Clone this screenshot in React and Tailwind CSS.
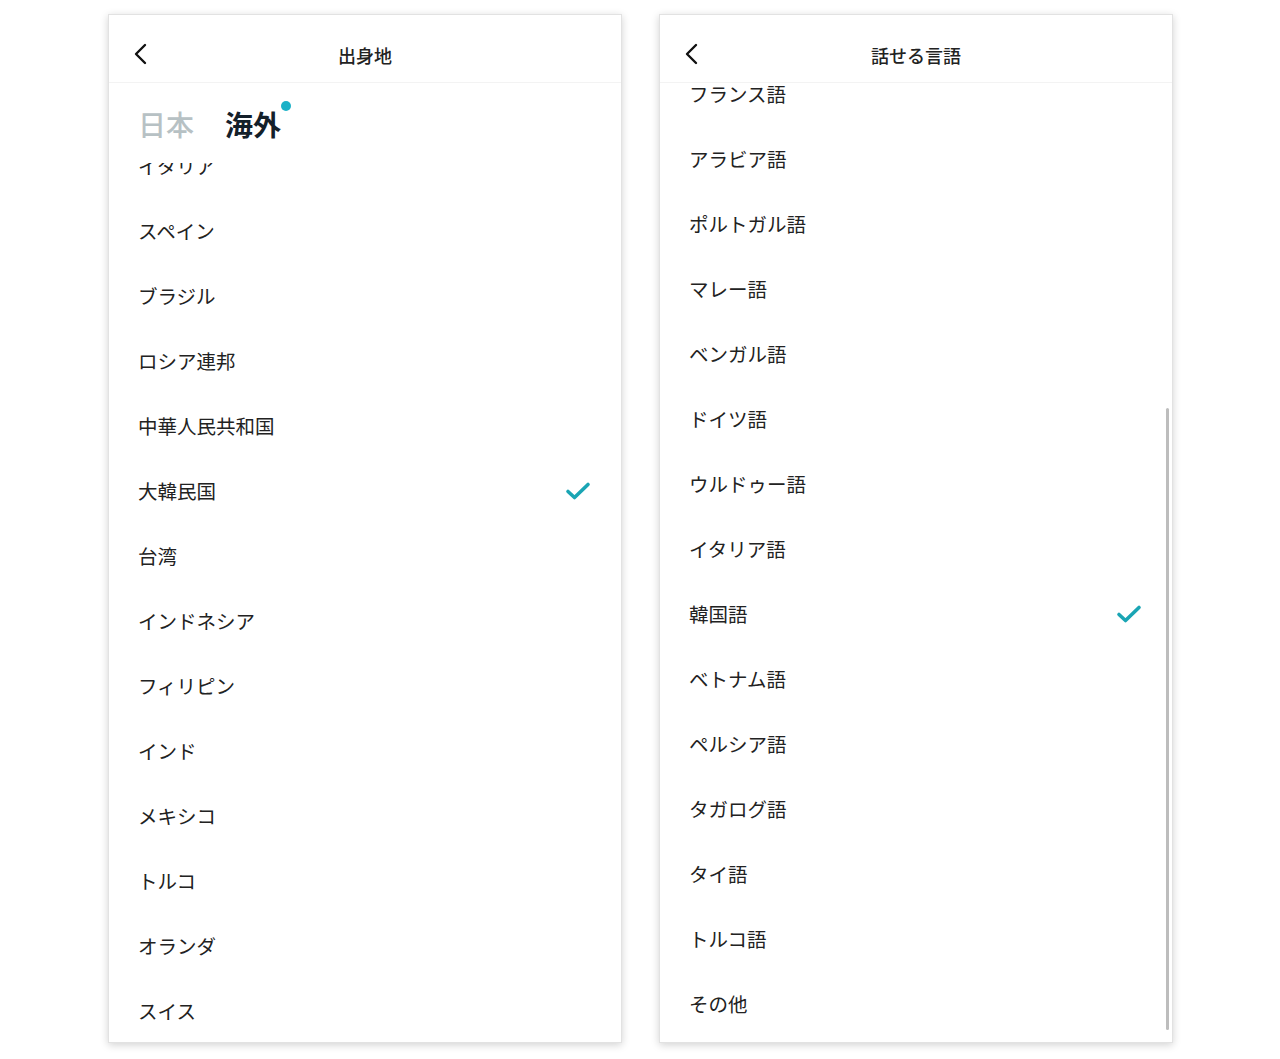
import React from 'react';

const countries = [
  'イタリア',
  'スペイン',
  'ブラジル',
  'ロシア連邦',
  '中華人民共和国',
  '大韓民国',
  '台湾',
  'インドネシア',
  'フィリピン',
  'インド',
  'メキシコ',
  'トルコ',
  'オランダ',
  'スイス',
];

const languages = [
  'フランス語',
  'アラビア語',
  'ポルトガル語',
  'マレー語',
  'ベンガル語',
  'ドイツ語',
  'ウルドゥー語',
  'イタリア語',
  '韓国語',
  'ベトナム語',
  'ペルシア語',
  'タガログ語',
  'タイ語',
  'トルコ語',
  'その他',
];

function BackIcon() {
  return (
    <svg width="16" height="22" viewBox="0 0 16 22" fill="none">
      <path d="M12 2 L3 11 L12 20" stroke="#111" strokeWidth="2.4" strokeLinecap="round" strokeLinejoin="round" />
    </svg>
  );
}

function CheckIcon() {
  return (
    <svg width="26" height="20" viewBox="0 0 26 20" fill="none">
      <path d="M3 10.5 L9.5 16.5 L23 3.5" stroke="#1aa5b4" strokeWidth="3.6" strokeLinecap="round" strokeLinejoin="round" />
    </svg>
  );
}

function Header({ title }) {
  return (
    <div className="relative flex h-[68px] shrink-0 items-center justify-center border-b border-[#f3f3f3]">
      <div className="absolute left-[24px] top-[28px]">
        <BackIcon />
      </div>
      <span className="mt-[14px] text-[18px] font-medium text-[#222]">{title}</span>
    </div>
  );
}

function Row({ label, checked }) {
  return (
    <div className="flex h-[65px] items-center justify-between pl-[29px] pr-[30px]">
      <span className="text-[19.5px] text-[#222]">{label}</span>
      {checked && <CheckIcon />}
    </div>
  );
}

function Panel({ children }) {
  return (
    <div className="relative flex h-[1029px] w-[514px] flex-col overflow-hidden border border-[#e2e2e2] bg-white shadow-[0_2px_8px_rgba(0,0,0,0.18)]">
      {children}
    </div>
  );
}

export default function App() {
  return (
    <div className="flex min-h-[1059px] justify-start gap-[37px] bg-white pl-[108px] pt-[14px] font-['Noto_Sans_CJK_JP','Noto_Sans',sans-serif]">
      <Panel>
        <Header title="出身地" />
        <div className="flex h-[80px] shrink-0 items-center gap-[31px] pl-[29px] pt-[2px]">
          <span className="text-[28px] font-medium text-[#b7c1c4]">日本</span>
          <span className="relative text-[28px] font-bold text-[#14202a]">
            海外
            <span className="absolute -right-[10px] -top-[2px] h-[10px] w-[10px] rounded-full bg-[#1bb1c7]" />
          </span>
        </div>
        <div className="flex-1 overflow-hidden">
          <div className="-mt-[30px]">
            {countries.map((c) => (
              <Row key={c} label={c} checked={c === '大韓民国'} />
            ))}
          </div>
        </div>
      </Panel>

      <Panel>
        <Header title="話せる言語" />
        <div className="flex-1 overflow-hidden">
          <div className="-mt-[22px]">
            {languages.map((l) => (
              <Row key={l} label={l} checked={l === '韓国語'} />
            ))}
          </div>
        </div>
        <div className="absolute bottom-[12px] right-[3px] top-[393px] w-[3px] rounded-full bg-[#bdbdbd]" />
      </Panel>
    </div>
  );
}
